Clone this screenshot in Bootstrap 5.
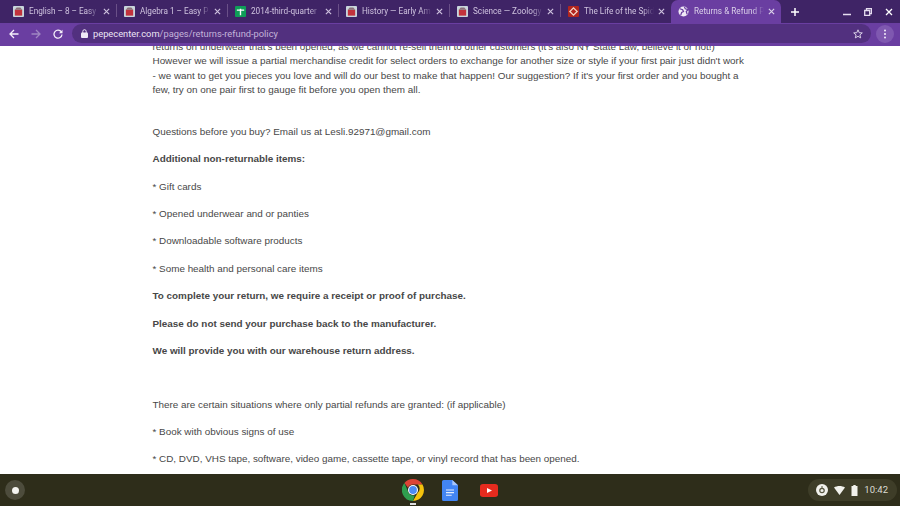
<!DOCTYPE html>
<html lang="en">
<head>
    <meta charset="UTF-8">
    <meta name="viewport" content="width=device-width, initial-scale=1.0">
    <title>Returns &amp; Refund Policy</title>
    <link rel="stylesheet" href="https://cdn.jsdelivr.net/npm/bootstrap@5.3.0/dist/css/bootstrap.min.css">
    <style>
        html, body { height: 100%; overflow: hidden; }
        body { font-family: "Roboto", "Liberation Sans", sans-serif; background: #fff; }
        .screen { height: 506px; }
        .tabstrip { height: 23px; background: #3f2466; padding-left: 5px; }
        .tabitem { width: 111px; height: 23px; padding: 0 6px 1px 8px; color: #cfc3df; font-size: 8.2px; position: relative; flex: none; }
        .tabitem + .tabitem::before { content: ""; position: absolute; left: 0; top: 4px; height: 13px; width: 1px; background: #6a5088; }
        .tabitem.now { background: #6a3ea1; border-radius: 7px 7px 0 0; color: #dcd2ea; padding-left: 7px; width: 110px; }
        .tabitem.now::before { display: none; }
        .tabtitle { flex: 1; white-space: nowrap; overflow: hidden; margin-left: 5px; -webkit-mask-image: linear-gradient(90deg, #000 84%, transparent 100%); mask-image: linear-gradient(90deg, #000 84%, transparent 100%); }
        .tabx { width: 7px; height: 7px; flex: none; margin-left: 4px; }
        .favi { width: 11px; height: 11px; flex: none; }
        .newtab { margin-left: 9px; }
        .winbtns { margin-left: auto; gap: 13px; padding-right: 7px; }
        .toolbar { height: 23px; background: #6a3ea1; padding: 0 0 2px 9px; gap: 12px; }
        .omni { flex: 1; height: 19px; background: #52307f; border-radius: 10px; margin-left: -3px; color: #c4b4da; font-size: 9.3px; padding: 0 8px 0 9px; gap: 5px; }
        .omni b { font-weight: 400; color: #ece5f4; }
        .menudot { width: 18px; height: 18px; background: #7f58b0; border-radius: 50%; margin: 0 6px 0 -7px; flex: none; }
        .pagearea { height: 428px; overflow: hidden; padding-left: 152.5px; padding-right: 150px; color: #474747; font-family: "Liberation Sans", Arial, sans-serif; font-size: 9.9px; line-height: 14.6px; }
        .pagetext { margin-top: -6.5px; }
        .pagetext p { margin: 0 0 12.8px; }
        .pagetext p.wide { margin-bottom: 27px; }
        .pagetext p.gapbelow { margin-bottom: 39px; }
        .shelf { height: 32px; background: #2e2d1a; position: relative; }
        .launcher { width: 20px; height: 20px; margin-left: 5px; border-radius: 50%; background: #4d4c3c; flex: none; }
        .launcher i { display: block; width: 7px; height: 7px; border-radius: 50%; background: #f4f4f0; }
        .shelfapps { position: absolute; left: 402px; top: 5px; gap: 18px; }
        .shelfapps svg { flex: none; display: block; }
        .chromedot { position: absolute; left: 8px; top: 24px; width: 6px; height: 2px; background: #ddd; }
        .tray { margin-left: auto; margin-right: 3px; height: 22px; background: #3e3d28; border-radius: 11px; padding: 0 9px 0 8px; color: #dcdcd4; font-size: 9.5px; gap: 6px; }
    </style>
</head>
<body>
    <svg width="0" height="0" class="d-block">
        <symbol id="xmark" viewBox="0 0 8 8"><path d="M1 1l6 6M7 1L1 7" stroke="currentColor" stroke-width="1.3"/></symbol>
        <symbol id="sitefav" viewBox="0 0 12 12"><rect width="12" height="12" rx="1" fill="#c9d6dc"/><rect x="2" y="4" width="8" height="6.5" fill="#c2323c"/><path d="M2 4l2-2.5h4L10 4z" fill="#8b6f78"/></symbol>
    </svg>
    <div class="screen d-flex flex-column">
        <div class="tabstrip d-flex align-items-center">
            <div class="tabitem d-flex align-items-center"><svg class="favi"><use href="#sitefav"/></svg><span class="tabtitle">English – 8 – Easy</span><svg class="tabx"><use href="#xmark"/></svg></div>
            <div class="tabitem d-flex align-items-center"><svg class="favi"><use href="#sitefav"/></svg><span class="tabtitle">Algebra 1 – Easy P</span><svg class="tabx"><use href="#xmark"/></svg></div>
            <div class="tabitem d-flex align-items-center"><svg class="favi" viewBox="0 0 12 12"><rect width="12" height="12" rx="1" fill="#0f9d58"/><path d="M2 4.500h8M6 3v7" stroke="#fff" stroke-width="1.500"/></svg><span class="tabtitle">2014-third-quarter</span><svg class="tabx"><use href="#xmark"/></svg></div>
            <div class="tabitem d-flex align-items-center"><svg class="favi"><use href="#sitefav"/></svg><span class="tabtitle">History — Early Am</span><svg class="tabx"><use href="#xmark"/></svg></div>
            <div class="tabitem d-flex align-items-center"><svg class="favi"><use href="#sitefav"/></svg><span class="tabtitle">Science — Zoology</span><svg class="tabx"><use href="#xmark"/></svg></div>
            <div class="tabitem d-flex align-items-center"><svg class="favi" viewBox="0 0 12 12"><rect width="12" height="12" rx="1" fill="#b3261e"/><path d="M6 2l4 4-4 4-4-4z" fill="none" stroke="#f3d6c8" stroke-width="1.4"/></svg><span class="tabtitle">The Life of the Spid</span><svg class="tabx"><use href="#xmark"/></svg></div>
            <div class="tabitem now d-flex align-items-center"><svg class="favi" viewBox="0 0 12 12"><circle cx="6" cy="6" r="5.5" fill="#efe9f6"/><path d="M2 3l3 1 1 2-2 1-1 3M7 1l1 2 3 1-2 2 1 3" fill="none" stroke="#6a3ea1" stroke-width="1.4"/></svg><span class="tabtitle">Returns &amp; Refund P</span><svg class="tabx"><use href="#xmark"/></svg></div>
            <svg class="newtab" width="10" height="10" viewBox="0 0 10 10"><path d="M5 1v8M1 5h8" stroke="#fff" stroke-width="1.5"/></svg>
            <div class="winbtns d-flex align-items-center text-white">
                <svg width="8" height="8" viewBox="0 0 8 8"><path d="M0 6.5h8" stroke="#e6ddf0" stroke-width="1.5"/></svg>
                <svg width="8" height="8" viewBox="0 0 8 8"><path d="M0.7 2.5h5v5h-5zM2.5 2V0.7h5v5H6" fill="none" stroke="#e6ddf0" stroke-width="1.3"/></svg>
                <svg width="8" height="8"><use href="#xmark"/></svg>
            </div>
        </div>
        <div class="toolbar d-flex align-items-center">
            <svg class="flex-none" width="10" height="10" viewBox="0 0 10 10"><path d="M9.5 5H1.2M5 1L1 5l4 4" fill="none" stroke="#f5f0fa" stroke-width="1.3"/></svg>
            <svg class="flex-none" width="10" height="10" viewBox="0 0 10 10"><path d="M.5 5h8.3M5 1l4 4-4 4" fill="none" stroke="#9f86c2" stroke-width="1.3"/></svg>
            <svg class="flex-none" width="10" height="10" viewBox="0 0 10 10"><path d="M8.4 3A4 4 0 1 0 9 5.500" fill="none" stroke="#f5f0fa" stroke-width="1.3"/><path d="M9.500 .8v3.400H6z" fill="#f5f0fa"/></svg>
            <div class="omni d-flex align-items-center">
                <svg width="7" height="9" viewBox="0 0 7 9"><rect y="3.500" width="7" height="5.500" rx="1" fill="#efe9f6"/><path d="M1.800 4V2.400a1.700 1.700 0 0 1 3.400 0V4" fill="none" stroke="#efe9f6"/></svg>
                <span><b>pepecenter.com</b>/pages/returns-refund-policy</span>
                <svg class="ms-auto" width="10" height="10" viewBox="0 0 10 10"><path d="M5 .8l1.200 2.900 3.100.2-2.400 2 .8 3L5 7.300 2.300 8.900l.8-3-2.400-2 3.100-.2z" fill="none" stroke="#d9cfe6"/></svg>
            </div>
            <div class="menudot d-flex flex-column align-items-center justify-content-center gap-0">
                <svg width="2" height="10" viewBox="0 0 2 10"><circle cx="1" cy="1.500" r="1" fill="#f2ecf8"/><circle cx="1" cy="5" r="1" fill="#f2ecf8"/><circle cx="1" cy="8.500" r="1" fill="#f2ecf8"/></svg>
            </div>
        </div>
        <div class="pagearea">
            <div class="pagetext">
                <p class="wide">returns on underwear that's been opened, as we cannot re-sell them to other customers (it's also NY State Law, believe it or not!)<br>However we will issue a partial merchandise credit for select orders to exchange for another size or style if your first pair just didn't work<br>- we want to get you pieces you love and will do our best to make that happen! Our suggestion? If it's your first order and you bought a<br>few, try on one pair first to gauge fit before you open them all.</p>
                <p>Questions before you buy? Email us at Lesli.92971@gmail.com</p>
                <p><strong>Additional non-returnable items:</strong></p>
                <p>* Gift cards</p>
                <p>* Opened underwear and or panties</p>
                <p>* Downloadable software products</p>
                <p>* Some health and personal care items</p>
                <p><strong>To complete your return, we require a receipt or proof of purchase.</strong></p>
                <p><strong>Please do not send your purchase back to the manufacturer.</strong></p>
                <p class="gapbelow"><strong>We will provide you with our warehouse return address.</strong></p>
                <p>There are certain situations where only partial refunds are granted: (if applicable)</p>
                <p>* Book with obvious signs of use</p>
                <p>* CD, DVD, VHS tape, software, video game, cassette tape, or vinyl record that has been opened.</p>
            </div>
        </div>
        <div class="shelf d-flex align-items-center">
            <div class="launcher d-flex align-items-center justify-content-center"><i></i></div>
            <div class="shelfapps d-flex align-items-center">
                <svg width="22" height="22" viewBox="0 0 22 22">
                    <path d="M11 0a11 11 0 0 1 9.500 5.500H11a5.500 5.500 0 0 0-5 3.200L2.400 4A11 11 0 0 1 11 0z" fill="#dc4437"/>
                    <path d="M20.500 5.500A11 11 0 0 1 11 22l4.700-8.200a5.500 5.500 0 0 0 .1-8.300z" fill="#f4c20d"/>
                    <path d="M11 22A11 11 0 0 1 2.400 4L6.700 14a5.500 5.500 0 0 0 6 2.300z" fill="#2f9e4f"/>
                    <circle cx="11" cy="11" r="5" fill="#fff"/><circle cx="11" cy="11" r="3.900" fill="#4c8bf5"/>
                </svg>
                <svg width="16" height="21" viewBox="0 0 14 20" preserveAspectRatio="none"><path d="M1.500 0H9l5 5v13.500a1.500 1.500 0 0 1-1.500 1.500h-11A1.500 1.500 0 0 1 0 18.500v-17A1.500 1.500 0 0 1 1.500 0z" fill="#4285f4"/><path d="M9 0l5 5H9z" fill="#a9c6fa"/><path d="M3.500 9.500h7M3.500 12h7M3.500 14.500h5" stroke="#e3edfd" stroke-width="1.100"/></svg>
                <svg class="ms-1" width="18" height="13" viewBox="0 0 18 14" preserveAspectRatio="none"><rect width="18" height="14" rx="3" fill="#e62b1e"/><path d="M7 4.300L12 7l-5 2.700z" fill="#fff"/></svg>
                <span class="chromedot"></span>
            </div>
            <div class="tray d-flex align-items-center">
                <svg width="12" height="12" viewBox="0 0 12 12"><circle cx="6" cy="6" r="6" fill="#f1f1ec"/><circle cx="6" cy="6.500" r="2.200" fill="none" stroke="#55543f" stroke-width="1.200"/><path d="M6 2v3" stroke="#55543f"/></svg>
                <svg width="11" height="9" viewBox="0 0 11 9"><path d="M0 1.500C3.200-.5 7.800-.5 11 1.500L5.500 9z" fill="#f1f1ec"/></svg>
                <svg width="7" height="11" viewBox="0 0 7 11"><path d="M2.300 0h2.400v1H6.500v10h-6V1h1.800z" fill="#f1f1ec"/></svg>
                <span>10:42</span>
            </div>
        </div>
    </div>
    <script src="https://cdn.jsdelivr.net/npm/bootstrap@5.3.0/dist/js/bootstrap.bundle.min.js"></script>
</body>
</html>
